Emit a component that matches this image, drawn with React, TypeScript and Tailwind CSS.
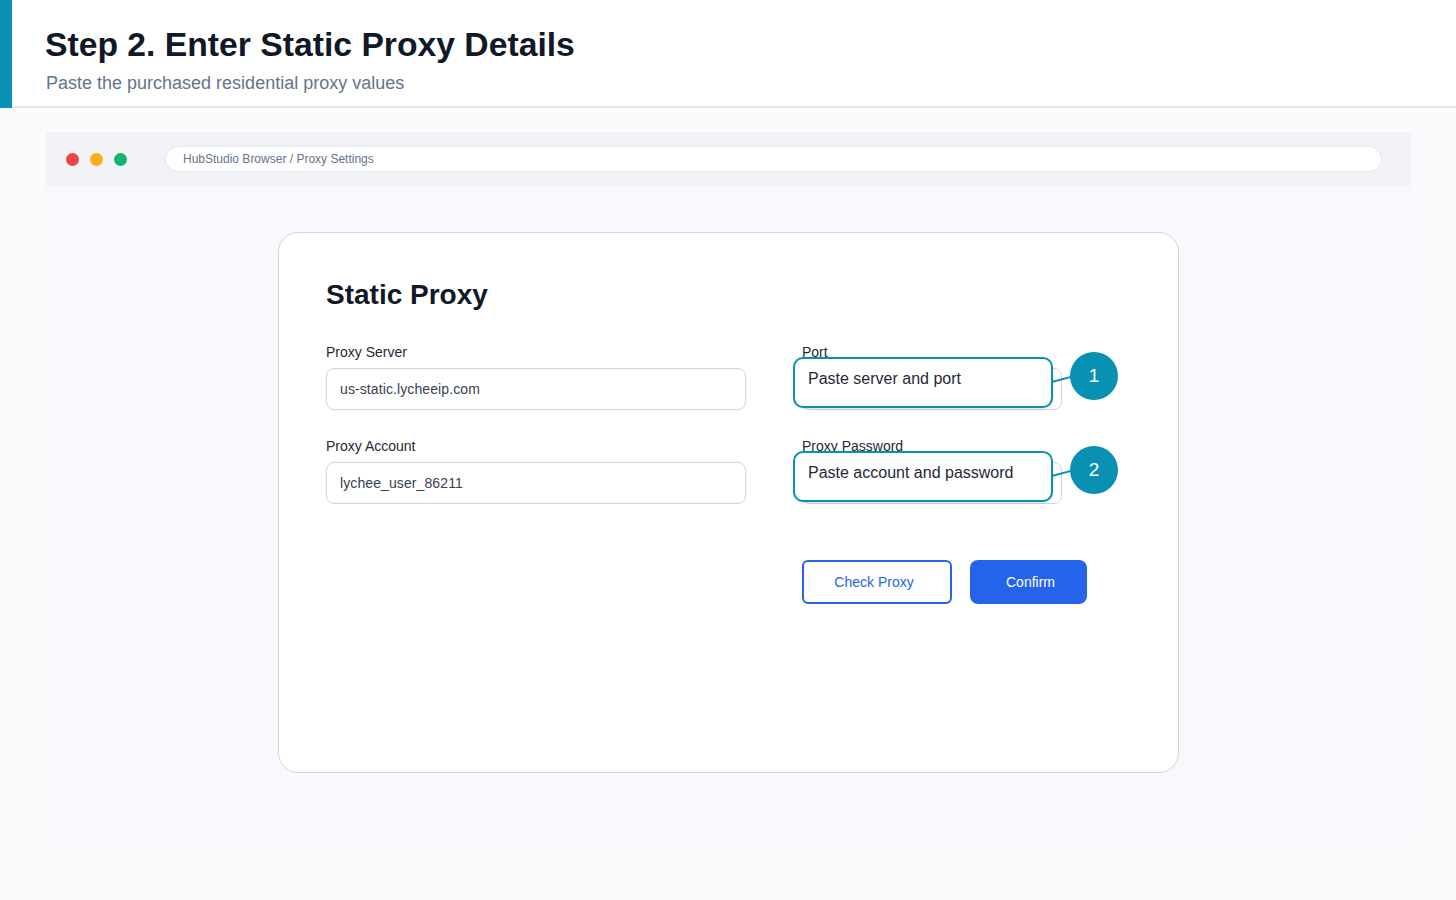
const font = { fontFamily: '"Liberation Sans", Arial, sans-serif' }

function Field({ label, value }: { label: string; value: string }) {
    return (
        <div className="flex flex-col">
            <span className="text-[14px] leading-[20px] text-[#1f2937]">{label}</span>
            <div className="mt-[6px] h-[42px] w-[420px] rounded-lg border border-[#d1d5db] bg-white flex items-center pl-[13px] text-[14px] tracking-[0.1px] text-[#374151]">
                {value}
            </div>
        </div>
    )
}

function CalloutField({ label, hint, n }: { label: string; hint: string; n: number }) {
    return (
        <div className="relative flex flex-col w-[260px]">
            <span className="text-[14px] leading-[20px] text-[#1f2937]">{label}</span>
            <div className="mt-[6px] h-[42px] w-[260px] rounded-lg border border-[#d1d5db] bg-white" />

            {/* connector */}
            <svg className="absolute left-[248px] top-[30px]" width="26" height="14" viewBox="0 0 26 14">
                <line x1="2.7" y1="9.7" x2="23" y2="4.4" stroke="#0891b2" strokeWidth="2" />
            </svg>

            {/* callout box */}
            <div className="absolute left-[-9px] top-[15px] h-[51px] w-[260px] rounded-[10px] border-2 border-[#0891b2] bg-white pl-[13px] pt-[8px] text-[16px] leading-[24px] text-[#1f2937] shadow-sm">
                {hint}
            </div>

            {/* badge */}
            <div className="absolute left-[268px] top-[10px] h-[48px] w-[48px] rounded-full bg-[#0891b2] flex items-center justify-center text-[19px] text-white">
                {n}
            </div>
        </div>
    )
}

export default function App() {
    return (
        <div className="min-h-screen bg-[#f9fafb]" style={font}>
            {/* Header */}
            <header className="flex bg-white">
                <div className="w-[12px] bg-[#0891b2] shrink-0" />
                <div className="flex-1 border-b-2 border-[#e5e7eb] pl-[33px] pt-[24px] pb-[11px]">
                    <h1 className="text-[33.7px] leading-[40px] font-bold text-[#111827]">Step 2. Enter Static Proxy Details</h1>
                    <p className="mt-[7px] pl-px text-[18px] leading-[24px] text-[#64748b]">
                        Paste the purchased residential proxy values
                    </p>
                </div>
            </header>

            {/* Browser mock */}
            <div className="pl-[46px] pr-[45px] pt-[24px]">
                <div className="flex flex-col">
                    <div className="h-[54px] bg-[#f1f3f7] flex items-center pl-[20px] pr-[29px]">
                        <div className="flex items-center gap-[11px]">
                            <span className="w-[13px] h-[13px] rounded-full bg-[#ef4444]" />
                            <span className="w-[13px] h-[13px] rounded-full bg-[#fbac22]" />
                            <span className="w-[13px] h-[13px] rounded-full bg-[#10b56a]" />
                        </div>
                        <div className="ml-[38px] flex-1 h-[26px] rounded-full border border-[#e5e7eb] bg-white flex items-center pl-[17px] text-[12px] text-[#64748b]">
                            HubStudio Browser / Proxy Settings
                        </div>
                    </div>

                    <div className="h-[656px] bg-[#f7f9fc] flex pl-[232px] pt-[46px]">
                        <div className="w-[901px] h-[541px] rounded-[20px] border border-[#d1d5db] bg-white pl-[47px] pt-[44px]">
                            <h2 className="text-[28px] leading-[36px] font-bold text-[#111827]">Static Proxy</h2>

                            <div className="mt-[29px] flex gap-[56px]">
                                <div className="flex flex-col gap-[26px]">
                                    <Field label="Proxy Server" value="us-static.lycheeip.com" />
                                    <Field label="Proxy Account" value="lychee_user_86211" />
                                </div>
                                <div className="flex flex-col">
                                    <div className="flex flex-col gap-[26px]">
                                        <CalloutField label="Port" hint="Paste server and port" n={1} />
                                        <CalloutField label="Proxy Password" hint="Paste account and password" n={2} />
                                    </div>
                                    <div className="mt-[56px] flex gap-[18px]">
                                        <button className="h-[44px] w-[150px] rounded-md border-2 border-[#2563eb] bg-white pr-[6px] text-[14px] text-[#2563eb]">
                                            Check Proxy
                                        </button>
                                        <button className="h-[44px] w-[117px] rounded-lg bg-[#2563eb] pl-[4px] text-[14px] text-white">
                                            Confirm
                                        </button>
                                    </div>
                                </div>
                            </div>
                        </div>
                    </div>
                </div>
            </div>
        </div>
    )
}
